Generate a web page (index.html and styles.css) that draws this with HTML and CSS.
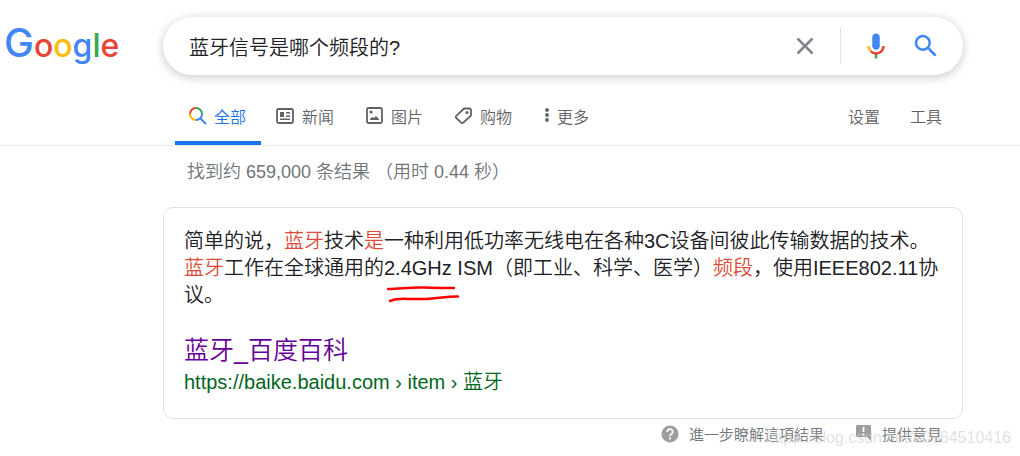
FILE: index.html
```
<!DOCTYPE html>
<html lang="zh-CN">
  <head>
    <meta charset="UTF-8" />
    <meta name="viewport" content="width=device-width, initial-scale=1.0" />
    <title>蓝牙信号是哪个频段的? - Google</title>
    <link rel="stylesheet" href="styles.css">
  </head>
  <body>
    <header class="header">
      <a class="logo" href="#" aria-label="Google"><span class="blue capital">G</span><span class="red">o</span><span class="yellow">o</span><span class="blue">g</span><span class="green">l</span><span class="red">e</span></a>
      <form class="search-box" role="search">
        <input class="search-input" type="text" value="蓝牙信号是哪个频段的?" aria-label="搜索" />
        <button class="icon-button" type="button" aria-label="清除">
          <svg width="18" height="18" viewBox="0 0 18 18"><path d="M1.5 1.5l15 15M16.5 1.5l-15 15" fill="none" stroke="#80868b" stroke-width="2.5" /></svg>
        </button>
        <span class="divider"></span>
        <button class="icon-button" type="button" aria-label="语音搜索">
          <svg width="30" height="30" viewBox="0 0 24 24">
            <path fill="#4285f4" d="M12 15c1.66 0 3-1.31 3-2.97V4.98C15 3.34 13.66 2 12 2S9 3.34 9 4.98v7.05C9 13.69 10.34 15 12 15z" />
            <path fill="#34a853" d="M11 18.08h2V22h-2z" />
            <path fill="#fbbc05" d="M7.05 16.87A6.7 6.7 0 0 1 5 12h2c0 1.45.56 2.42 1.47 3.38z" />
            <path fill="#ea4335" d="M12 16.93a4.97 4.97 0 0 1-3.54-1.55l-1.41 1.49A6.9 6.9 0 0 0 12 19c3.87 0 7-3.13 7-7h-2c0 2.92-2.24 4.93-5 4.93z" />
          </svg>
        </button>
        <button class="icon-button" type="submit" aria-label="Google 搜索">
          <svg width="30" height="30" viewBox="0 0 24 24"><path fill="#4285f4" d="M20.49 19l-5.73-5.73A6.5 6.5 0 1 0 9.5 16c1.61 0 3.09-.59 4.23-1.57l.27.28v.79l5 4.99L20.49 19zM5 9.5a4.5 4.5 0 1 1 9 0 4.5 4.5 0 0 1-9 0z" /></svg>
        </button>
      </form>
    </header>

    <nav class="tabs">
      <a class="tab active" href="#">
        <svg width="20" height="20" viewBox="0 0 20 20" fill="none" stroke-width="2">
          <path stroke="#ea4335" d="M3 8A6 6 0 0 1 9 2" />
          <path stroke="#34a853" d="M9 2a6 6 0 0 1 6 6" />
          <path stroke="#4285f4" d="M15 8A6 6 0 0 1 9 14M13 12l6 6" />
          <path stroke="#fbbc05" d="M9 14a6 6 0 0 1-6-6" />
        </svg>
        全部
      </a>
      <a class="tab" href="#">
        <svg width="20" height="20" viewBox="0 0 20 20">
          <rect x="2" y="3" width="16" height="14" rx="1.5" fill="none" stroke="#5f6368" stroke-width="1.8" />
          <path fill="#5f6368" d="M5 6h4v5H5zM11 6h4v1.5h-4zM11 9.500h4V11h-4zM5 12.5h10V14H5z" />
        </svg>
        新闻
      </a>
      <a class="tab" href="#">
        <svg width="20" height="20" viewBox="0 0 20 20">
          <rect x="3" y="2" width="15" height="15" rx="1.5" fill="none" stroke="#5f6368" stroke-width="1.8" />
          <circle cx="7" cy="6" r="1.6" fill="#5f6368" />
          <path fill="#5f6368" d="M6 14v-1l2-2 2 1 2-2 3 3v1z" />
        </svg>
        图片
      </a>
      <a class="tab" href="#">
        <svg width="20" height="20" viewBox="0 0 20 20">
          <path fill="none" stroke="#5f6368" stroke-width="1.8" stroke-linejoin="round" d="M11 2.5h5.5A1.500 1.500 0 0 1 18 4v5.500l-7.700 7.200a1.500 1.500 0 0 1-2.200 0L3.300 12a1.500 1.500 0 0 1 0-2.200z" />
          <circle cx="14" cy="6.5" r="1.6" fill="#5f6368" />
        </svg>
        购物
      </a>
      <a class="tab more" href="#">
        <svg width="6" height="20" viewBox="0 0 6 20" fill="#5f6368"><circle cx="3" cy="4" r="1.9" /><circle cx="3" cy="9" r="1.9" /><circle cx="3" cy="14" r="1.9" /></svg>
        更多
      </a>
      <div class="tools">
        <a class="tab" href="#">设置</a>
        <a class="tab" href="#">工具</a>
      </div>
    </nav>

    <main class="results">
      <p class="stats">找到约 659,000 条结果 （用时 0.44 秒）</p>
      <article class="card">
        <p class="snippet">简单的说，<em>蓝牙</em>技术<em>是</em>一种利用低功率无线电在各种3C设备间彼此传输数据的技术。<em>蓝牙</em>工作在全球通用的<span class="marked">2.4GHz<svg class="strokes" width="74" height="18" viewBox="0 0 74 18" fill="none" stroke="#f00" stroke-width="2.5" stroke-linecap="round"><path d="M2 4C15 4 22 2 38 2.500S60 3 68 3" /><path d="M4 16c5-2 11-2.500 19-2h13c13 0 22-2.500 36-2.500" /></svg></span> ISM（即工业、科学、医学）<em>频段</em>，使用IEEE802.11协议。</p>
        <h3 class="title"><a href="#">蓝牙_百度百科</a></h3>
        <cite class="url">https://baike.baidu.com › item › 蓝牙</cite>
      </article>
      <footer class="feedback">
        <a href="#">
          <svg width="18" height="18" viewBox="0 0 18 18"><circle cx="9" cy="9" r="8.5" fill="#9e9e9e" /><path d="M6.3 7A2.7 2.7 0 1 1 10.2 9.2Q9 10 9 11.2M9 12.5v2" fill="none" stroke="#fff" stroke-width="1.7" /></svg>
          進一步瞭解這項結果
        </a>
        <a href="#">
          <svg width="18" height="18" viewBox="0 0 18 18"><path fill="#9e9e9e" d="M3 0h13a1 1 0 0 1 1 1v15l-4-4H3a1 1 0 0 1-1-1V1a1 1 0 0 1 1-1z" /><path d="M9.500 2v5M9.500 8.500v2" stroke="#fff" stroke-width="1.8" /></svg>
          提供意見
        </a>
      </footer>
    </main>
    <div class="watermark">https://blog.csdn.net/u0564510416</div>
  </body>
</html>
```
FILE: styles.css
```
* {
  box-sizing: border-box;
}
body {
  margin: 0;
  min-height: 100vh;
  font-family: "Liberation Sans", "Noto Sans CJK SC", sans-serif;
  font-weight: 350;
  background: #fff;
  color: #202124;
  position: relative;
}
a {
  color: inherit;
  text-decoration: none;
}
svg {
  display: block;
  flex: none;
}
.header {
  display: flex;
  align-items: flex-start;
  padding: 17px 57px 0 4px;
}
.logo {
  width: 159px;
  flex: none;
  font-family: Inter, sans-serif;
  font-size: 32px;
  font-weight: 500;
  line-height: 52px;
}
.capital {
  font-size: 40px;
}
.blue {
  color: #4285f4;
}
.red {
  color: #ea4335;
}
.yellow {
  color: #fbbc05;
}
.green {
  color: #34a853;
}
.search-box {
  flex: 1;
  display: flex;
  align-items: center;
  height: 58px;
  padding: 0 22px 0 26px;
  border-radius: 29px;
  background: #fff;
  box-shadow: 0 2px 8px 1px rgba(64, 60, 67, 0.24);
}
.search-input {
  flex: 1;
  min-width: 0;
  padding: 0;
  border: none;
  outline: none;
  background: transparent;
  font: inherit;
  font-size: 20px;
  color: #202124;
}
.icon-button {
  display: flex;
  padding: 0;
  margin-left: 20px;
  border: none;
  background: transparent;
  cursor: pointer;
}
.divider {
  width: 1px;
  height: 36px;
  margin-left: 26px;
  background: #dfe1e5;
}

.tabs {
  display: flex;
  height: 71px;
  padding: 17px 57px 0 175px;
  border-bottom: 1px solid #ebebeb;
  color: #5f6368;
  font-size: 16px;
}
.tab {
  display: flex;
  gap: 7px;
  height: 53px;
  margin-right: 30px;
  line-height: 52px;
}
.tab svg {
  margin-top: 14px;
}
.tab.active {
  padding: 0 15px 0 12px;
  margin-right: 14px;
  border-bottom: 4px solid #1a73e8;
  color: #1a73e8;
}
.tab.more {
  margin: 0 0 0 2px;
}
.tools {
  display: flex;
  gap: 30px;
  margin-left: auto;
  padding-right: 21px;
}
.tools .tab {
  margin-right: 0;
}

.results {
  padding: 0 57px 0 163px;
}
.stats {
  margin: 0;
  padding-left: 24px;
  font-size: 18px;
  line-height: 52px;
  color: #70757a;
}
.card {
  margin-top: 9px;
  padding: 20px 20px 22px;
  border: 1px solid #dfe1e5;
  border-radius: 10px;
}
.snippet {
  margin: 0;
  font-size: 20px;
  line-height: 27px;
}
.snippet em {
  font-style: normal;
  color: #dd4b39;
}
.marked {
  position: relative;
}
.strokes {
  position: absolute;
  top: 28px;
  left: 2px;
}
.title {
  margin: 24px 0 0;
  font-size: 25px;
  font-weight: 350;
  line-height: 35px;
  color: #609;
}
.url {
  display: block;
  font-size: 20px;
  font-style: normal;
  line-height: 28px;
  color: #006621;
}
.feedback {
  display: flex;
  justify-content: flex-end;
  gap: 30px;
  padding: 4px 21px 0 0;
  font-family: "Noto Sans CJK TC", sans-serif;
  font-size: 15px;
  line-height: 22px;
  color: #70757a;
}
.feedback a {
  display: flex;
  align-items: center;
  gap: 10px;
}
.watermark {
  position: absolute;
  right: 9px;
  bottom: 8px;
  font-size: 16px;
  line-height: 20px;
  color: rgba(205, 205, 205, 0.6);
  pointer-events: none;
}
```
